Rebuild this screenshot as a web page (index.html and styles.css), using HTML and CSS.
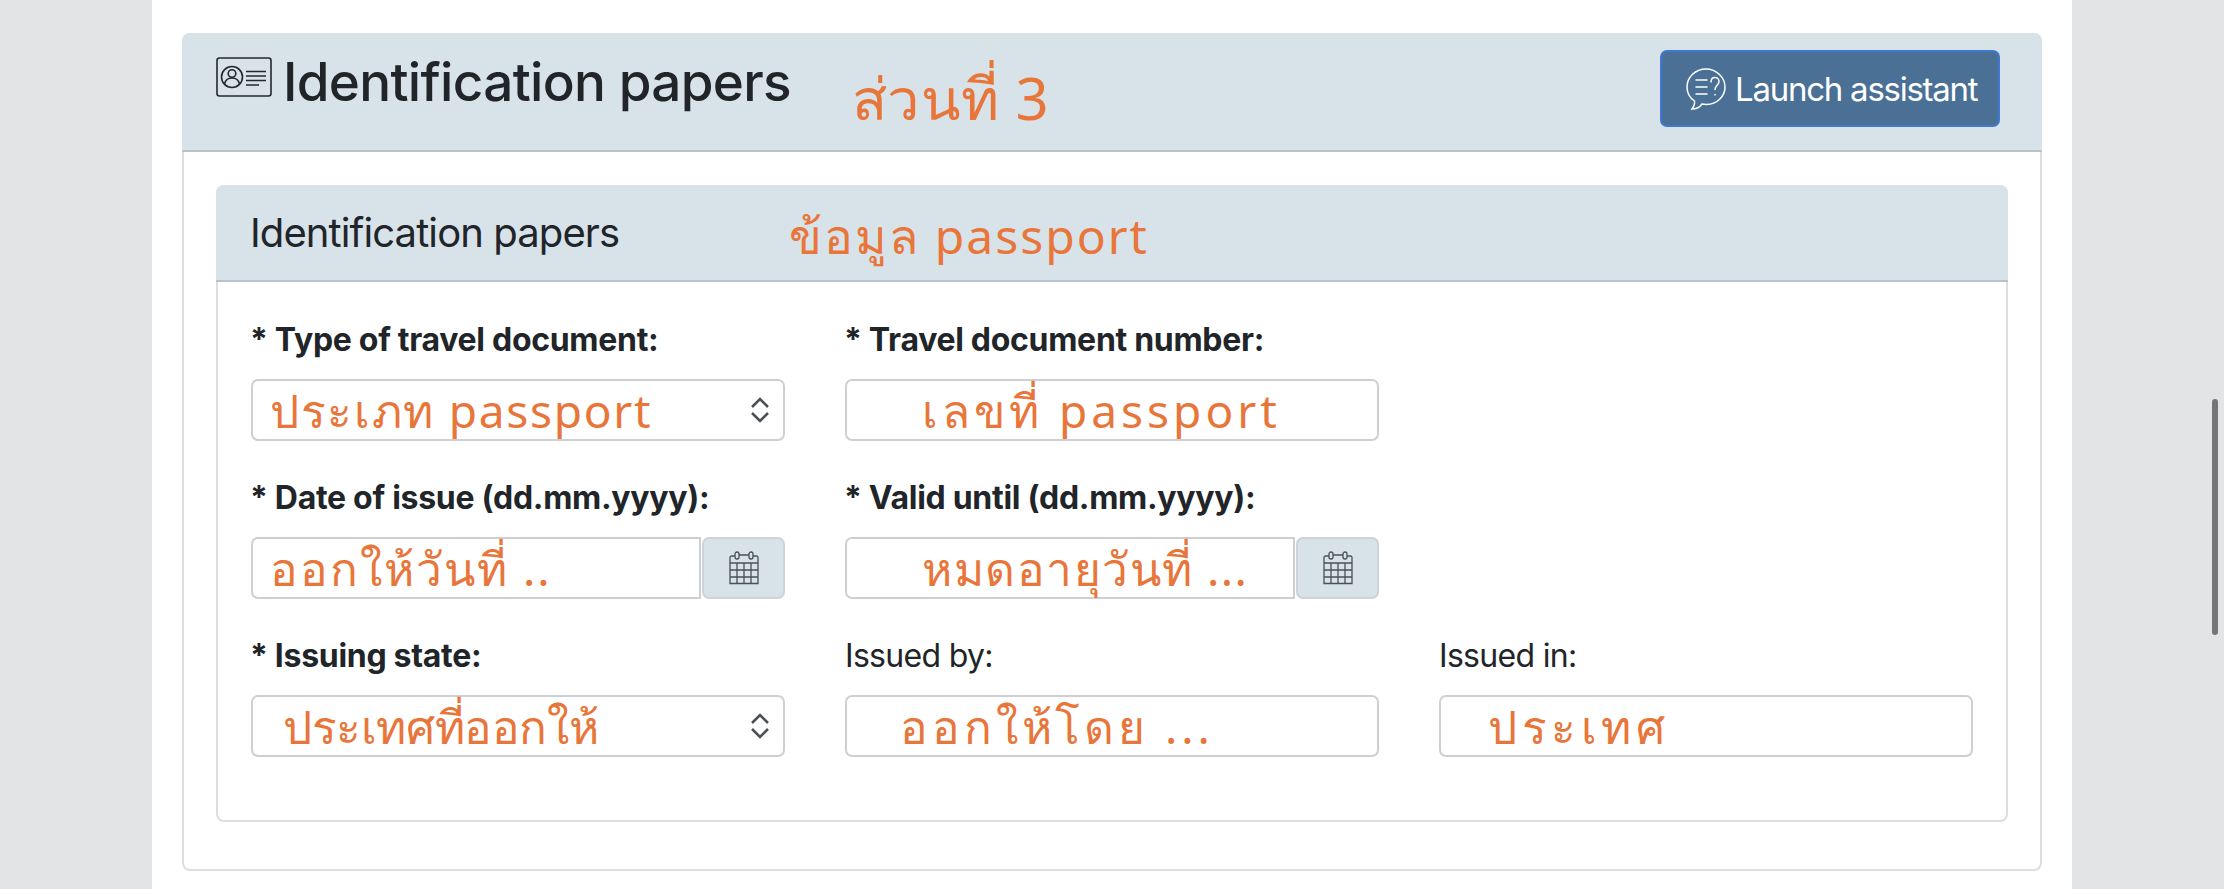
FILE: index.html
```html
<!DOCTYPE html>
<html lang="en">
<head>
<meta charset="utf-8">
<title>Identification papers</title>
<link rel="stylesheet" href="styles.css">
</head>
<body>
<main class="page">
  <section class="card">
    <header class="card-head">
      <svg class="id-icon" viewBox="0 0 56 40" fill="none" stroke="#23282d" stroke-width="1.6">
        <rect x="1" y="1" width="54" height="38" rx="2.5"/>
        <circle cx="16" cy="20" r="10.5"/>
        <circle cx="16" cy="16.5" r="3.8"/>
        <path d="M8.5 27c1-4.500 4-6 7.500-6s6.500 1.500 7.500 6"/>
        <path d="M30 14.500h20M30 19h20M30 23.500h20M30 28h13"/>
      </svg>
      <h1 class="title">Identification papers</h1>
      <span class="hand hand-title">ส่วนที่ 3</span>
      <button class="assist" type="button">
        <svg class="chat-icon" viewBox="0 0 40 42" fill="none" stroke="#fff" stroke-width="1.5" stroke-linecap="round">
          <path d="M20 1C9.500 1 1 9.200 1 19c0 6 3 11 7.500 14 .5 3-1 6-2.500 8 4 0 8-2 10-5 1.500.3 3 .4 4.500.4 10.500 0 18.500-8 18.500-17.400S30.500 1 20 1z"/>
          <path d="M10 12h11M10 19h11M10 26h11"/>
          <path d="M25 14c0-3 2-4.500 4-4.500s4 1.500 4 4c0 3.500-4 4-4 8M29 26.500v.5"/>
        </svg>
        <span>Launch assistant</span>
      </button>
    </header>
    <div class="card-body">
      <section class="inner">
        <header class="inner-head">
          <h2 class="subtitle">Identification papers</h2>
          <span class="hand hand-sub">ข้อมูล passport</span>
        </header>
        <div class="form">
          <div class="field">
            <label class="label req">* Type of travel document:</label>
            <div class="control select"><span class="hand hand-type">ประเภท passport</span>
              <svg class="chev" viewBox="0 0 20 26" fill="none" stroke="#4a5058" stroke-width="2.6"><path d="M2 10l8-8 8 8M2 16l8 8 8-8"/></svg>
            </div>
          </div>
          <div class="field">
            <label class="label req">* Travel document number:</label>
            <div class="control"><span class="hand hand-number">เลขที่ passport</span></div>
          </div>
          <div class="field empty"></div>
          <div class="field">
            <label class="label req">* Date of issue (dd.mm.yyyy):</label>
            <div class="date">
              <div class="control date-input"><span class="hand hand-issue">ออกให้วันที่ ..</span></div>
              <button class="cal" type="button">
                <svg class="cal-icon" viewBox="0 0 30 34" fill="none" stroke="#4a5058" stroke-width="1.3">
                  <path d="M6 5H2.500A1.500 1.500 0 0 0 1 6.500V32.500h28V6.500A1.500 1.500 0 0 0 27.500 5H24M10 4h10"/>
                  <rect x="6" y="1" width="4" height="7" rx="2"/><rect x="20" y="1" width="4" height="7" rx="2"/>
                  <path d="M1 12h28M1 19h28M1 26h28M8 12v20M15 12v20M22 12v20"/>
                </svg>
              </button>
            </div>
          </div>
          <div class="field">
            <label class="label req">* Valid until (dd.mm.yyyy):</label>
            <div class="date">
              <div class="control date-input"><span class="hand hand-valid">หมดอายุวันที่ ...</span></div>
              <button class="cal" type="button">
                <svg class="cal-icon" viewBox="0 0 30 34" fill="none" stroke="#4a5058" stroke-width="1.3">
                  <path d="M6 5H2.500A1.500 1.500 0 0 0 1 6.500V32.500h28V6.500A1.500 1.500 0 0 0 27.500 5H24M10 4h10"/>
                  <rect x="6" y="1" width="4" height="7" rx="2"/><rect x="20" y="1" width="4" height="7" rx="2"/>
                  <path d="M1 12h28M1 19h28M1 26h28M8 12v20M15 12v20M22 12v20"/>
                </svg>
              </button>
            </div>
          </div>
          <div class="field empty"></div>
          <div class="field">
            <label class="label req">* Issuing state:</label>
            <div class="control select"><span class="hand hand-state">ประเทศที่ออกให้</span>
              <svg class="chev" viewBox="0 0 20 26" fill="none" stroke="#4a5058" stroke-width="2.6"><path d="M2 10l8-8 8 8M2 16l8 8 8-8"/></svg>
            </div>
          </div>
          <div class="field">
            <label class="label plain">Issued by:</label>
            <div class="control"><span class="hand hand-by">ออกให้โดย ...</span></div>
          </div>
          <div class="field">
            <label class="label plain">Issued in:</label>
            <div class="control"><span class="hand hand-in">ประเทศ</span></div>
          </div>
        </div>
      </section>
    </div>
  </section>
</main>
<div class="scroll-thumb"></div>
</body>
</html>
```

FILE: styles.css
```css
* { box-sizing: border-box; }
html, body { margin: 0; height: 889px; overflow: hidden; }
body {
  background: #e2e4e6;
  color: #212529;
  font-family: Inter, "Liberation Sans", "Noto Sans", sans-serif;
}
.page {
  width: 1920px;
  height: 889px;
  margin: 0 auto;
  padding: 33px 30px 0;
  background: #fff;
}
.card {
  border: 2px solid #dcdee0;
  border-top: 0;
  border-radius: 8px;
  height: 838px;
}
.card-head {
  height: 119px;
  margin: 0 -2px;
  padding: 0 42px 0 34px;
  display: flex;
  align-items: flex-start;
  background: #d8e2e9;
  border-bottom: 2px solid #b9c3ca;
  border-radius: 8px 8px 0 0;
}
.id-icon { width: 56px; height: 40px; margin-top: 24px; flex: none; }
.title {
  margin: 19px 0 0 11px;
  font-size: 53px;
  font-weight: 500;
  letter-spacing: -0.68px;
  line-height: 60px;
}
.hand {
  color: #e8763a;
  font-family: "Noto Sans", "DejaVu Sans", sans-serif;
  font-size: 46px;
  line-height: 60px;
  white-space: nowrap;
}
.hand-title { margin: 30px 0 0 61px; font-size: 58px; letter-spacing: 0.5px; line-height: 70px; }
.assist {
  margin: 17px 0 0 auto;
  width: 340px;
  height: 77px;
  padding: 0 0 0 24px;
  display: flex;
  align-items: center;
  gap: 9px;
  color: #fff;
  font: 400 33px Inter, "Liberation Sans", sans-serif;
  letter-spacing: -1.25px;
  background: #4a7096;
  border: 2px solid #3f78d0;
  border-radius: 7px;
}
.chat-icon { width: 40px; height: 42px; flex: none; }
.card-body { padding: 33px 32px 0; }
.inner {
  height: 637px;
  border: 2px solid #dcdee0;
  border-top: 0;
  border-radius: 8px;
}
.inner-head {
  height: 97px;
  margin: 0 -2px;
  padding: 0 0 0 34px;
  display: flex;
  align-items: center;
  background: #d8e2e9;
  border-bottom: 2px solid #b9c3ca;
  border-radius: 8px 8px 0 0;
}
.subtitle { margin: 0; font-size: 40px; font-weight: 400; letter-spacing: -0.9px; line-height: 48px; }
.hand-sub { margin: 6px 0 0 170px; font-size: 48px; letter-spacing: 2px; }
.form {
  padding: 37px 33px 0;
  display: grid;
  grid-template-columns: repeat(3, 534px);
  column-gap: 60px;
  row-gap: 36px;
}
.field { min-height: 122px; }
.label { display: block; height: 42px; margin-bottom: 18px; font-size: 32px; line-height: 42px; }
.req { margin-left: -1px; font-weight: 700; letter-spacing: -0.3px; }
.plain { letter-spacing: -0.7px; }
.control {
  height: 62px;
  display: flex;
  align-items: center;
  border: 2px solid #cdd0d3;
  border-radius: 7px;
  background: #fff;
}
.select { justify-content: space-between; padding-right: 13px; }
.hand-type { margin-left: 17px; letter-spacing: 1.7px; }
.hand-number { margin-left: 75px; letter-spacing: 4px; }
.hand-issue { margin-left: 17px; letter-spacing: 2px; }
.hand-valid { margin-left: 75px; letter-spacing: 1.5px; }
.hand-state { margin-left: 30px; letter-spacing: -0.4px; }
.hand-by { margin-left: 53px; letter-spacing: 3.9px; }
.hand-in { margin-left: 47px; letter-spacing: 4.500px; }
.chev { width: 20px; height: 26px; flex: none; }
.date { display: flex; gap: 1px; }
.date-input { flex: 1; border-radius: 7px 0 0 7px; }
.cal {
  width: 83px;
  height: 62px;
  padding: 0;
  display: flex;
  align-items: center;
  justify-content: center;
  background: #d8e2e9;
  border: 2px solid #cdd3d8;
  border-radius: 7px;
}
.cal-icon { width: 30px; height: 34px; }
.scroll-thumb {
  position: absolute;
  left: 2212px;
  top: 399px;
  width: 6px;
  height: 236px;
  border-radius: 3px;
  background: #757575;
}
```
